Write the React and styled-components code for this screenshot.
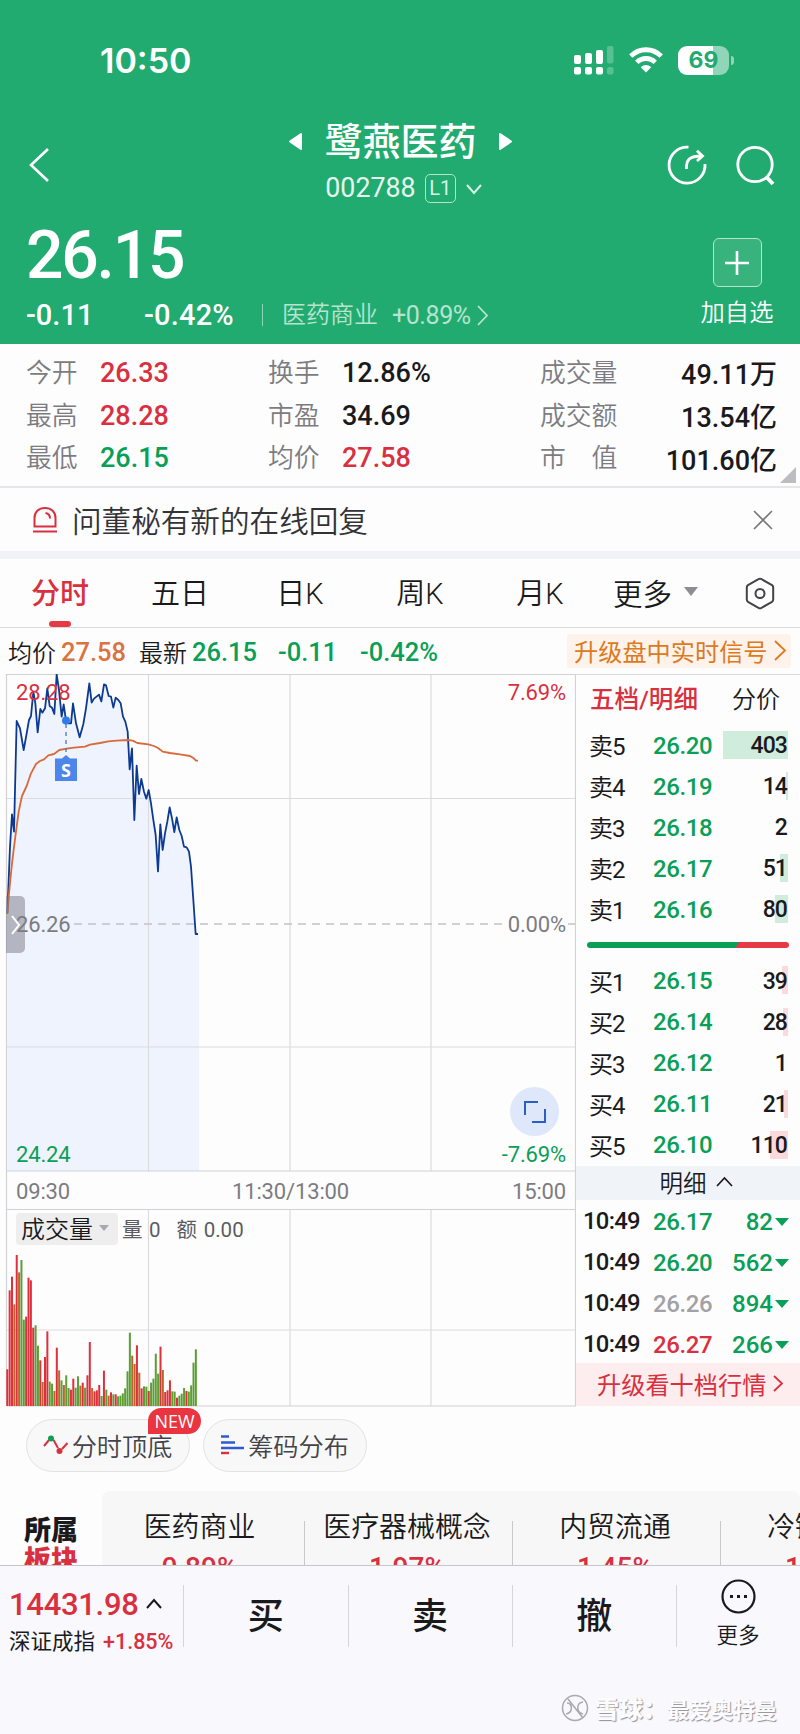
import React from 'react'
import styled, { createGlobalStyle } from 'styled-components'

const RED = '#d9303f'
const GREEN = '#0a9f56'
const BLACK = '#1a1a1c'
const GRAY = '#7c7c80'

const GlobalStyle = createGlobalStyle`
  * {
    box-sizing: border-box;
  }

  body {
    margin: 0;
    background: #fdfdfe;
    color: ${BLACK};
    font-family: Roboto, "Noto Sans CJK SC", sans-serif;
    font-weight: 400;
  }
`

const Page = styled.div`
  width: 800px;
  height: 1734px;
  overflow: hidden;
  display: flex;
  flex-direction: column;
  white-space: nowrap;

  > * {
    flex: none;
  }
`

const Text = styled.span`
  font-size: ${({ size }) => size}px;
  font-weight: ${({ weight }) => weight || 400};
  color: ${({ color }) => color || 'inherit'};
  letter-spacing: ${({ spacing }) => spacing || 0}px;
  width: ${({ width }) => (width ? `${width}px` : 'auto')};
  margin: ${({ margin }) => margin || 0};
  line-height: 1;
`

const Icon = styled.svg`
  display: block;
  flex: none;
  fill: none;
  stroke: currentColor;
  stroke-width: ${({ $stroke }) => $stroke || 2};
  overflow: visible;
`

/* header */

const Header = styled.header`
  height: 344px;
  background: #22ab70;
  color: #ffffff;
`

const StatusBar = styled.div`
  height: 120px;
  padding: 0 66px 0 100px;
  display: flex;
  justify-content: space-between;
  align-items: center;
`

const Clock = styled.span`
  font-family: Inter, sans-serif;
  font-weight: 600;
  font-size: 34px;
`

const StatusIcons = styled.div`
  display: flex;
  align-items: center;
  column-gap: 15px;
`

const SignalIcon = styled(Icon)`
  fill: #ffffff;
  stroke: none;
`

const Battery = styled.div`
  position: relative;
  width: 51px;
  height: 29px;
  margin-right: 5px;
  border-radius: 9px;
  background: linear-gradient(90deg, #ffffff 69%, #90d5b8 69%);
  color: #22ab70;
  font-family: Inter, sans-serif;
  font-weight: 700;
  font-size: 23px;
  line-height: 29px;
  text-align: center;

  &:after {
    content: '';
    position: absolute;
    right: -5px;
    top: 10px;
    width: 3px;
    height: 9px;
    border-radius: 0 3px 3px 0;
    background: #90d5b8;
  }
`

const NavBar = styled.div`
  height: 90px;
  padding: 0 25px 0 31px;
  display: grid;
  grid-template-columns: 80px 1fr 110px;
  align-items: center;
`

const NavTitle = styled.div`
  padding-left: 25px;
  display: flex;
  flex-direction: column;
  align-items: center;
`

const TitleRow = styled.div`
  height: 44px;
  padding-bottom: 5px;
  display: flex;
  align-items: center;
  column-gap: 22px;
`

const Triangle = styled(Icon)`
  fill: #ffffff;
  stroke-linejoin: round;
`

const CodeRow = styled.div`
  height: 42px;
  display: flex;
  align-items: center;
  padding: 3px 0 0 5px;
`

const LevelTag = styled.span`
  width: 31px;
  height: 29px;
  margin: 0 11px 0 9px;
  border: 1.5px solid #b5e4cf;
  border-radius: 5px;
  font-size: 20px;
  line-height: 26px;
  text-align: center;
  color: #d8f3e7;
`

const NavActions = styled.div`
  display: flex;
  justify-content: space-between;
  padding-left: 3px;
`

const Quote = styled.div`
  height: 134px;
  padding: 0 26px;
  display: flex;
  justify-content: space-between;
`

const Price = styled.div`
  height: 90px;
  padding-top: 13px;
  font-weight: 500;
  font-size: 66px;
  line-height: 66px;
  letter-spacing: -2.2px;
`

const ChangeRow = styled.div`
  height: 30px;
  display: flex;
  align-items: center;
`

const HeaderDivider = styled.i`
  width: 1px;
  height: 22px;
  margin: 0 19px 0 28px;
  background: #90d5b8;
`

const Watch = styled.div`
  width: 74px;
  padding-top: 28px;
  display: flex;
  flex-direction: column;
  align-items: center;
  row-gap: 14px;
`

const AddButton = styled.button`
  width: 49px;
  height: 49px;
  padding: 0;
  display: grid;
  place-items: center;
  border: 1px solid #b5e4cf;
  border-radius: 6px;
  background: #38b37e;
  color: #ffffff;
`

/* stats */

const Stats = styled.section`
  position: relative;
  height: 144px;
  padding: 7px 23px 8px 26px;
  display: grid;
  grid-template-columns: 242px 272px 237px;
  grid-template-rows: repeat(3, 42.7px);
  border-bottom: 2px solid #e6e6ea;
`

const Stat = styled.div`
  display: flex;
  align-items: center;
  justify-content: ${({ wide }) => (wide ? 'space-between' : 'flex-start')};
`

const StatLabel = styled.span`
  width: ${({ wide }) => (wide ? 'auto' : '74px')};
  padding-bottom: 4px;
  font-size: 25.8px;
  font-weight: 350;
  color: ${GRAY};
  white-space: pre;
`

const StatValue = styled.span`
  padding-top: 1px;
  font-size: 27px;
  font-weight: 500;
  color: ${({ color }) => color || BLACK};
`

const Corner = styled.i`
  position: absolute;
  right: 4px;
  bottom: 3px;
  border-style: solid;
  border-width: 0 0 16px 16px;
  border-color: transparent transparent #bdbdc0 transparent;
`

const Notice = styled.div`
  height: 63px;
  padding: 0 28px 0 33px;
  display: flex;
  align-items: center;
`

const NoticeText = styled.span`
  flex: 1;
  padding-left: 15px;
  font-size: 29.6px;
  font-weight: 350;
  color: #333336;
`

const Gap = styled.div`
  height: 8px;
  background: #f1f2f7;
`

/* tabs */

const Tabs = styled.nav`
  height: 69px;
  display: flex;
  align-items: center;
  border-bottom: 1px solid #d9d9dc;
`

const Tab = styled.a`
  position: relative;
  width: 120px;
  height: 68px;
  text-align: center;
  font-size: 29px;
  line-height: 70px;
  font-weight: ${({ active }) => (active ? 500 : 350)};
  color: ${({ active }) => (active ? RED : BLACK)};

  &:after {
    content: '';
    display: ${({ active }) => (active ? 'block' : 'none')};
    position: absolute;
    left: 49px;
    bottom: 0;
    width: 22px;
    height: 6px;
    border-radius: 3px;
    background: #e63946;
  }
`

const MoreTab = styled.a`
  width: 146px;
  padding: 0 0 3px 13px;
  display: flex;
  align-items: center;
  column-gap: 12px;
  font-size: 29.5px;
  font-weight: 350;
`

const Caret = styled.i`
  border-style: solid;
  border-width: ${({ size }) => `${size * 0.6}px ${size / 2}px 0`};
  border-color: ${({ color }) => color || '#8e8e92'} transparent transparent;
`

const Legend = styled.div`
  height: 46px;
  padding: 0 9px 0 8px;
  display: flex;
  align-items: center;
  font-size: 24px;
  font-weight: 350;
`

const LegendValue = styled.span`
  width: ${({ width }) => width}px;
  padding: 2px 0 0 ${({ gap }) => gap || 0}px;
  font-size: 25.5px;
  font-weight: 500;
  color: ${({ color }) => color};
`

const SignalButton = styled.a`
  width: 224px;
  height: 34px;
  margin-left: auto;
  padding: 0 6px 2px 7px;
  display: flex;
  align-items: center;
  justify-content: space-between;
  border-radius: 3px;
  background: #fdf3ea;
  color: #dc7a1f;
  font-size: 24.2px;
  font-weight: 400;
`

/* chart + order book */

const Main = styled.main`
  height: 733px;
  display: grid;
  grid-template-columns: 576px 224px;
`

const ChartBox = styled.div`
  position: relative;
`

const ChartSvg = styled.svg`
  display: block;
`

const ChartLabel = styled.span`
  position: absolute;
  top: ${({ top }) => top}px;
  left: ${({ left }) => (left === undefined ? 'auto' : `${left}px`)};
  right: ${({ right }) => (right === undefined ? 'auto' : `${right}px`)};
  font-size: 22px;
  line-height: 26px;
  letter-spacing: -0.15px;
  color: ${({ color }) => color || GRAY};
`

const Handle = styled.div`
  position: absolute;
  left: 6px;
  top: 222px;
  width: 19px;
  height: 57px;
  display: grid;
  place-items: center;
  border-radius: 0 5px 5px 0;
  background: rgba(120, 122, 130, 0.5);
  color: #ffffff;
`

const Expand = styled.div`
  position: absolute;
  left: 510px;
  top: 413px;
  width: 49px;
  height: 49px;
  display: grid;
  place-items: center;
  border-radius: 50%;
  background: #dfe8fb;
  color: #2c5fc4;
`

const VolumeBar = styled.div`
  position: absolute;
  left: 16px;
  top: 539px;
  height: 32px;
  display: flex;
  align-items: center;
  font-size: 20.5px;
  color: #5c5c60;
`

const VolumeSelect = styled.span`
  width: 102px;
  height: 32px;
  margin-right: 4px;
  padding: 0 9px 3px 5px;
  display: flex;
  align-items: center;
  justify-content: space-between;
  border-radius: 4px;
  background: #eeeeef;
  color: ${BLACK};
  font-size: 24px;
  font-weight: 350;
`

const VolumeFigure = styled.span`
  padding-bottom: 2px;
  margin-right: 16px;
  word-spacing: 1.5px;
`

const Book = styled.aside`
  border-top: 1px solid #d9d9dc;
`

const BookTabs = styled.div`
  height: 50px;
  padding: 0 20px 0 14px;
  display: flex;
  align-items: center;
  justify-content: space-between;
`

const BookRow = styled.div`
  position: relative;
  height: 41.1px;
  padding: 0 12px 0 13px;
  display: grid;
  grid-template-columns: 64px 1fr auto;
  align-items: center;
`

const TickRow = styled(BookRow)`
  height: 40.8px;
  padding: 4px 12px 0 7px;
  grid-template-columns: 70px 1fr auto;
`

const BookLabel = styled.span`
  padding-bottom: 2px;
  font-size: 24px;
  font-weight: 400;
  letter-spacing: -0.9px;
`

const BookPrice = styled.span`
  font-size: 24px;
  font-weight: 500;
  letter-spacing: -0.4px;
  color: ${({ color }) => color || GREEN};
`

const Depth = styled.i`
  position: absolute;
  right: 12px;
  top: 6px;
  height: 28px;
  background: ${({ sell }) => (sell ? '#d0ecdd' : '#fbd9dc')};
`

const BookAmount = styled.span`
  position: relative;
  padding-right: 1px;
  font-size: 23px;
  font-weight: 500;
  letter-spacing: -0.9px;
`

const Ratio = styled.div`
  height: 6px;
  margin: 12px 11px 12px;
  border-radius: 3px;
  background: linear-gradient(120deg, ${GREEN} 74%, #e63946 74%);
`

const DetailBar = styled.div`
  height: 34px;
  display: flex;
  align-items: center;
  justify-content: center;
  column-gap: 10px;
  padding: 0 0 2px 15px;
  background: #f0f3f8;
  font-size: 23.5px;
  font-weight: 350;
`

const TickAmount = styled.span`
  display: flex;
  align-items: center;
  column-gap: 2px;
  margin-right: -1px;
  font-size: 24px;
  font-weight: 500;
  color: ${GREEN};
`

const Upgrade = styled.a`
  height: 43px;
  padding: 0 18px 2px 21px;
  display: flex;
  align-items: center;
  justify-content: space-between;
  background: #fdedee;
  color: ${RED};
  font-size: 24.2px;
`

/* pills */

const Pills = styled.div`
  height: 84px;
  padding: 12px 26px 0;
  display: flex;
  column-gap: 13px;
`

const Pill = styled.button`
  position: relative;
  width: 164px;
  height: 53px;
  padding: 0 0 2px;
  display: flex;
  align-items: center;
  justify-content: center;
  column-gap: 4px;
  border: 1px solid #e2e2e5;
  border-radius: 27px;
  background: #f8f8f9;
  color: #444448;
  font-family: inherit;
  font-size: 25.2px;
  font-weight: 350;
`

const Badge = styled.b`
  position: absolute;
  left: 121px;
  top: -12px;
  width: 53px;
  height: 26px;
  border-radius: 13px 13px 13px 0;
  background: #ea3440;
  color: #ffffff;
  font-family: "Open Sans", sans-serif;
  font-size: 18px;
  font-weight: 400;
  line-height: 27px;
  text-align: center;
`

/* sectors */

const Sectors = styled.section`
  height: 74px;
  overflow: hidden;
  display: grid;
  grid-template-columns: 102px 698px;
`

const SectorTitle = styled.div`
  padding: 25px 0 0 24px;
  font-size: 27px;
  font-weight: 900;
  line-height: 30px;
`

const SectorTitleRed = styled.div`
  color: ${RED};
`

const SectorList = styled.div`
  height: 120px;
  overflow: hidden;
  display: flex;
  border-radius: 8px 8px 0 0;
  background: #f7f7f8;
`

const Sector = styled.div`
  flex: none;
  width: ${({ width }) => width}px;
  padding: 17px ${({ first }) => (first ? 7 : 3)}px 0 0;
  text-align: center;
  font-size: 27.9px;
  font-weight: 350;
  line-height: 40px;
`

const SectorValue = styled.div`
  font-size: 28px;
  font-weight: 500;
  color: ${RED};
`

const SectorLine = styled.i`
  flex: none;
  width: 1px;
  height: 60px;
  margin-top: 30px;
  background: #c9c9cd;
`

/* bottom */

const Bottom = styled.footer`
  height: 169px;
  background: #f8f8fd;
  border-top: 1px solid #c6c6ca;
`

const Trade = styled.div`
  height: 104px;
  padding-top: 19px;
  display: grid;
  grid-template-columns: 183px 164.5px 164px 164.5px 124px;
`

const Index = styled.div`
  padding-left: 9px;
`

const IndexRow = styled.div`
  height: ${({ height }) => height}px;
  display: flex;
  align-items: center;
  column-gap: 8px;
`

const TradeButton = styled.a`
  height: 62px;
  border-left: 1px solid #d5d5da;
  text-align: center;
  font-size: 36px;
  font-weight: 500;
  line-height: 65px;
`

const MoreButton = styled.a`
  height: 62px;
  padding-right: 1px;
  border-left: 1px solid #d5d5da;
  display: flex;
  flex-direction: column;
  align-items: center;
  row-gap: 11px;
`

const MoreIcon = styled(Icon)`
  margin-top: -6px;
`

const Watermark = styled.div`
  height: 64px;
  padding: 11px 23px 0 0;
  display: flex;
  align-items: center;
  justify-content: flex-end;
  color: #fcfcff;
  font-size: 22px;
  font-weight: 700;
  text-shadow: 1px 1px 1px #8f8f94;

  span {
    width: 72px;
    margin-left: 6px;
    font-size: 24px;
    font-weight: 900;
  }
`

const stats = [
  ['今开', '26.33', RED],
  ['换手', '12.86%'],
  ['成交量', '49.11万'],
  ['最高', '28.28', RED],
  ['市盈', '34.69'],
  ['成交额', '13.54亿'],
  ['最低', '26.15', GREEN],
  ['均价', '27.58', RED],
  ['市　值', '101.60亿'],
]

const sells = [
  ['卖5', '26.20', 403, 65],
  ['卖4', '26.19', 14, 2],
  ['卖3', '26.18', 2, 0],
  ['卖2', '26.17', 51, 8],
  ['卖1', '26.16', 80, 13],
]

const buys = [
  ['买1', '26.15', 39, 6],
  ['买2', '26.14', 28, 5],
  ['买3', '26.12', 1, 0],
  ['买4', '26.11', 21, 4],
  ['买5', '26.10', 110, 18],
]

const ticks = [
  ['10:49', '26.17', 82, GREEN],
  ['10:49', '26.20', 562, GREEN],
  ['10:49', '26.26', 894, '#a2a2a6'],
  ['10:49', '26.27', 266, RED],
]

// three chart units per pixel
const pricePoints = '22,760 30,560 36,463 42,515 50,183 60,205 71,270 80,220 87,180 93,168 100,95 106,130 113,217 121,147 127,158 135,145 142,85 149,138 156,143 163,162 170,43 177,90 185,170 191,133 198,182 205,190 213,190 219,130 228,190 239,232 250,192 258,145 268,70 275,128 282,116 297,104 304,124 312,73 318,76 326,108 333,110 340,143 347,113 355,120 362,130 369,170 376,185 383,215 389,328 396,265 403,480 410,317 417,402 424,357 432,395 439,416 446,390 453,430 460,480 467,525 474,634 481,493 488,570 495,520 502,485 509,442 516,475 523,516 530,472 538,510 545,528 552,560 560,562 567,575 573,620 580,720 587,822 594,822'
const averagePoints = '22,762 28,690 36,610 46,530 56,455 66,408 80,378 93,340 108,312 120,303 132,298 145,286 162,282 178,270 200,266 222,263 255,260 270,254 300,249 325,244 350,242 385,240 398,242 412,249 445,253 462,258 474,264 488,275 510,279 540,283 570,288 580,294 588,302 594,302'

const volumes = 'r110 r347 r388 o305 r453 o401 g438 g259 r268 r385 r377 r235 g242 g181 r137 o72 r147 r224 g73 g67 o45 r175 o107 g77 o63 g92 g54 r49 r82 g55 g89 o61 r70 g55 r92 r192 o54 r44 r47 r63 g30 r106 g49 o31 r41 g35 r35 g29 g31 g38 g53 g104 g220 o151 o126 r182 o100 r53 g59 g58 r45 g70 g82 g157 g97 r178 o108 r42 r47 r77 g44 g43 r25 g31 g37 g54 r45 g43 g62 g130 g170'.split(' ')
const volumeColors = { r: '#e02f3a', g: '#5b9f34', o: '#b9662f' }

function Chevron({ dir, width, height, stroke = 2, color }) {
  const w = width
  const h = height
  const points = {
    left: `${w},0 0,${h / 2} ${w},${h}`,
    right: `0,0 ${w},${h / 2} 0,${h}`,
    down: `0,0 ${w / 2},${h} ${w},0`,
    up: `0,${h} ${w / 2},0 ${w},${h}`,
  }
  return (
    <Icon width={w} height={h} color={color} $stroke={stroke}>
      <polyline points={points[dir]} />
    </Icon>
  )
}

function Chart() {
  return (
    <ChartBox>
      <ChartSvg width="576" height="733" viewBox="0 0 576 733">
        <polygon
          points={`22,1533 ${pricePoints} 597,822 597,1533`}
          fill="#eef3fe"
          transform="translate(0 -14) scale(0.33333)"
        />
        <g stroke="#dcdce0" strokeWidth="1.2">
          <path d="M6.5 124.5H575M6.5 373H575M148.5 0V497M290 0V497M431 0V497" />
          <path d="M148.5 535.5V732M290 535.5V732M431 535.5V732M6.5 656H575" />
        </g>
        <path d="M6.5 .5H576M6.5 497H576M6.5 535.5H576M6.5 732H576M6.5 0V732M575.5 0V732" stroke="#d2d2d6" strokeWidth="1.2" fill="none" />
        <path d="M74 250H505M568 250H575" stroke="#c2c2c6" strokeWidth="1.4" strokeDasharray="8 6" />
        <g transform="translate(0 -14) scale(0.33333)" fill="none" strokeWidth="5.4" strokeLinejoin="round">
          <polyline points={pricePoints} stroke="#0d3a90" />
          <polyline points={averagePoints} stroke="#d9693a" />
        </g>
        <path d="M66 50V84" stroke="#4a76b8" strokeWidth="1.3" strokeDasharray="4 4" />
        <circle cx="66" cy="46.5" r="4" fill="#2f7bea" />
        <path d="M55 84.5H62L66 81L70 84.5H77V107H55Z" fill="#4d86ea" />
        <text x="66" y="102.5" textAnchor="middle" fill="#ffffff" fontFamily="Open Sans" fontWeight="700" fontSize="18">S</text>
        {volumes.map((item, i) => {
          const height = Number(item.slice(1)) / 3
          return (
            <rect key={i} x={6.3 + i * 2.357} y={732 - height} width="2" height={height} fill={volumeColors[item[0]]} />
          )
        })}
      </ChartSvg>
      <ChartLabel top={6} left={16} color={RED}>28.28</ChartLabel>
      <ChartLabel top={6} right={10} color={RED}>7.69%</ChartLabel>
      <Handle>
        <Chevron dir="right" width={7} height={18} />
      </Handle>
      <ChartLabel top={238} left={16}>26.26</ChartLabel>
      <ChartLabel top={238} right={10}>0.00%</ChartLabel>
      <Expand>
        <Icon width="22" height="22">
          <path d="M14 1H1V14M21 8V21H8" />
        </Icon>
      </Expand>
      <ChartLabel top={468} left={16} color={GREEN}>24.24</ChartLabel>
      <ChartLabel top={468} right={10} color={GREEN}>-7.69%</ChartLabel>
      <ChartLabel top={505} left={16}>09:30</ChartLabel>
      <ChartLabel top={505} left={232}>11:30/13:00</ChartLabel>
      <ChartLabel top={505} right={10}>15:00</ChartLabel>
      <VolumeBar>
        <VolumeSelect>
          成交量
          <Caret size={10} color="#a9a9ad" />
        </VolumeSelect>
        <VolumeFigure>量 0</VolumeFigure>
        <VolumeFigure>额 0.00</VolumeFigure>
      </VolumeBar>
    </ChartBox>
  )
}

function DepthRow({ row, sell }) {
  const [label, price, amount, width] = row
  return (
    <BookRow>
      <BookLabel>{label}</BookLabel>
      <BookPrice>{price}</BookPrice>
      <Depth sell={sell ? 1 : 0} style={{ width }} />
      <BookAmount>{amount}</BookAmount>
    </BookRow>
  )
}

function App() {
  return (
    <Page>
      <GlobalStyle />
      <Header>
        <StatusBar>
          <Clock>10:50</Clock>
          <StatusIcons>
            <SignalIcon width="40" height="29">
              <rect x="0" y="9" width="7" height="9" rx="2" />
              <rect x="11" y="7" width="7" height="11" rx="2" />
              <rect x="22" y="4" width="7" height="14" rx="2" />
              <rect x="33" y="0" width="6.5" height="17.5" rx="2" opacity=".25" />
              <rect x="0" y="21" width="7" height="7.5" rx="2" />
              <rect x="11" y="21" width="7" height="7.5" rx="2" />
              <rect x="22" y="21" width="7" height="7.5" rx="2" />
              <rect x="33" y="21" width="6.5" height="7.5" rx="2" opacity=".25" />
            </SignalIcon>
            <Icon width="34" height="26" $stroke={4.8}>
              <path d="M1.8 9.2C10 .6 24 .6 32.2 9.2" />
              <path d="M7.8 15.4C13 10.2 21 10.2 26.2 15.4" />
              <path d="M17 25.4L11.8 20.2C14.8 17.4 19.2 17.4 22.2 20.2Z" fill="#ffffff" stroke="none" />
            </Icon>
            <Battery>69</Battery>
          </StatusIcons>
        </StatusBar>
        <NavBar>
          <Chevron dir="left" width={17} height={32} stroke={2.6} />
          <NavTitle>
            <TitleRow>
              <Triangle width="13" height="17">
                <path d="M12 1V16L1 8.5Z" />
              </Triangle>
              <Text size={38} weight={500}>鹭燕医药</Text>
              <Triangle width="13" height="17">
                <path d="M1 1V16L12 8.5Z" />
              </Triangle>
            </TitleRow>
            <CodeRow>
              <Text size={26.8} color="#e6f7ef">002788</Text>
              <LevelTag>L1</LevelTag>
              <Chevron dir="down" width={14} height={8} color="#d8f3e7" />
            </CodeRow>
          </NavTitle>
          <NavActions>
            <Icon width="38" height="38" $stroke={2.8}>
              <path d="M20.5 1.2A18 18 0 1 0 37 18" />
              <path d="M18.5 23C18 14 21 10 34 10M29 4.8L34.5 10L29 15" />
            </Icon>
            <Icon width="38" height="38" $stroke={2.8}>
              <circle cx="18" cy="18.5" r="17.2" />
              <path d="M29.5 31L36 38" strokeWidth="4" />
            </Icon>
          </NavActions>
        </NavBar>
        <Quote>
          <div>
            <Price>26.15</Price>
            <ChangeRow>
              <Text size={29} weight={500} width={118}>-0.11</Text>
              <Text size={29} weight={500} spacing={0.2}>-0.42%</Text>
              <HeaderDivider />
              <Text size={24} weight={350} color="#b5e4cf">医药商业</Text>
              <Text size={25} spacing={-0.4} color="#b5e4cf" margin="0 7px 0 14px">+0.89%</Text>
              <Chevron dir="right" width={9} height={19} stroke={1.8} color="#b5e4cf" />
            </ChangeRow>
          </div>
          <Watch>
            <AddButton>
              <Icon width="24" height="24" $stroke={2.6}>
                <path d="M12 0V24M0 12H24" />
              </Icon>
            </AddButton>
            <Text size={24.3} weight={350}>加自选</Text>
          </Watch>
        </Quote>
      </Header>
      <Stats>
        {stats.map(([label, value, color], i) => (
          <Stat key={label} wide={i % 3 === 2 ? 1 : 0}>
            <StatLabel wide={i % 3 === 2 ? 1 : 0}>{label}</StatLabel>
            <StatValue color={color}>{value}</StatValue>
          </Stat>
        ))}
        <Corner />
      </Stats>
      <Notice>
        <Icon width="24" height="26" color={RED}>
          <path d="M1.5 19.5V11C1.5 5 5.5 1 12 1C18.5 1 22.5 5 22.5 11V19.5ZM0 24.5H24M12.5 6C15.5 6.5 17 8.5 17 11.5" />
        </Icon>
        <NoticeText>问董秘有新的在线回复</NoticeText>
        <Icon width="18" height="18" color="#77777a" $stroke={1.6}>
          <path d="M0 0L18 18M18 0L0 18" />
        </Icon>
      </Notice>
      <Gap />
      <Tabs>
        <Tab active={1}>分时</Tab>
        <Tab>五日</Tab>
        <Tab>日K</Tab>
        <Tab>周K</Tab>
        <Tab>月K</Tab>
        <MoreTab>
          更多
          <Caret size={15} />
        </MoreTab>
        <Icon width="28" height="31" color="#444448">
          <path d="M12.5 1.2Q14 .4 15.5 1.2L26 7.2Q27.2 8 27.2 9.5V21.5Q27.2 23 26 23.8L15.5 29.8Q14 30.6 12.5 29.8L2 23.8Q.8 23 .8 21.5V9.5Q.8 8 2 7.2Z" />
          <circle cx="14" cy="15.5" r="4.5" />
        </Icon>
      </Tabs>
      <Legend>
        均价
        <LegendValue width={83} gap={5} color="#d9733f">27.58</LegendValue>
        最新
        <LegendValue width={91} gap={5} color={GREEN}>26.15</LegendValue>
        <LegendValue width={82} color={GREEN}>-0.11</LegendValue>
        <LegendValue width={90} color={GREEN}>-0.42%</LegendValue>
        <SignalButton>
          升级盘中实时信号
          <Chevron dir="right" width={10} height={19} stroke={1.8} />
        </SignalButton>
      </Legend>
      <Main>
        <Chart />
        <Book>
          <BookTabs>
            <Text size={24.6} weight={500} color={RED}>五档/明细</Text>
            <Text size={24} weight={350}>分价</Text>
          </BookTabs>
          {sells.map((row) => <DepthRow key={row[0]} row={row} sell />)}
          <Ratio />
          {buys.map((row) => <DepthRow key={row[0]} row={row} />)}
          <DetailBar>
            明细
            <Chevron dir="up" width={15} height={8} stroke={1.7} />
          </DetailBar>
          {ticks.map(([time, price, amount, color]) => (
            <TickRow key={price}>
              <Text size={23.8} weight={500} spacing={-0.7}>{time}</Text>
              <BookPrice color={color}>{price}</BookPrice>
              <TickAmount>
                {amount}
                <Caret size={14} color={GREEN} />
              </TickAmount>
            </TickRow>
          ))}
          <Upgrade>
            升级看十档行情
            <Chevron dir="right" width={8} height={15} stroke={1.8} />
          </Upgrade>
        </Book>
      </Main>
      <Pills>
        <Pill>
          <Icon width="24" height="20" color={RED}>
            <path d="M0 11L5 5M9.5 5L14 13M18 14L23.5 8" />
            <circle cx="7" cy="3.5" r="3" fill={GREEN} stroke="none" />
            <circle cx="15.5" cy="16" r="3" fill={RED} stroke="none" />
          </Icon>
          分时顶底
          <Badge>NEW</Badge>
        </Pill>
        <Pill>
          <Icon width="23" height="20" color="#2f5bd0" $stroke={2.4}>
            <path d="M0 1.5H8M0 7.5H14M0 13H23" />
            <path d="M0 18H8" stroke={RED} />
          </Icon>
          筹码分布
        </Pill>
      </Pills>
      <Sectors>
        <SectorTitle>
          所属
          <SectorTitleRed>板块</SectorTitleRed>
        </SectorTitle>
        <SectorList>
          <Sector width={202} first={1}>
            医药商业
            <SectorValue>0.89%</SectorValue>
          </Sector>
          <SectorLine />
          <Sector width={207}>
            医疗器械概念
            <SectorValue>1.97%</SectorValue>
          </Sector>
          <SectorLine />
          <Sector width={207}>
            内贸流通
            <SectorValue>1.45%</SectorValue>
          </Sector>
          <SectorLine />
          <Sector width={207}>
            冷链物流
            <SectorValue>1.32%</SectorValue>
          </Sector>
        </SectorList>
      </Sectors>
      <Bottom>
        <Trade>
          <Index>
            <IndexRow height={38}>
              <Text size={31} weight={500} spacing={-0.3} color={RED}>14431.98</Text>
              <Chevron dir="up" width={14} height={8} />
            </IndexRow>
            <IndexRow height={37}>
              <Text size={21.5}>深证成指</Text>
              <Text size={21.5} weight={500} color={RED}>+1.85%</Text>
            </IndexRow>
          </Index>
          <TradeButton>买</TradeButton>
          <TradeButton>卖</TradeButton>
          <TradeButton>撤</TradeButton>
          <MoreButton>
            <MoreIcon width="35" height="35" $stroke={2.2}>
              <circle cx="17.5" cy="17.5" r="16" />
              <path d="M9 17.5h3M16 17.5h3M23 17.5h3" strokeWidth="3" />
            </MoreIcon>
            <Text size={21.5} weight={350}>更多</Text>
          </MoreButton>
        </Trade>
        <Watermark>
          <Icon width="28" height="28" color="#a9a9ae" $stroke={1.5}>
            <circle cx="14" cy="14" r="12.5" />
            <path d="M6 9C12 9 12 19 5 20M22 8C15 9 15 18 22 20M7 5L22 24" />
          </Icon>
          <span>雪球：</span>
          最爱奥特曼
        </Watermark>
      </Bottom>
    </Page>
  )
}

export default App
